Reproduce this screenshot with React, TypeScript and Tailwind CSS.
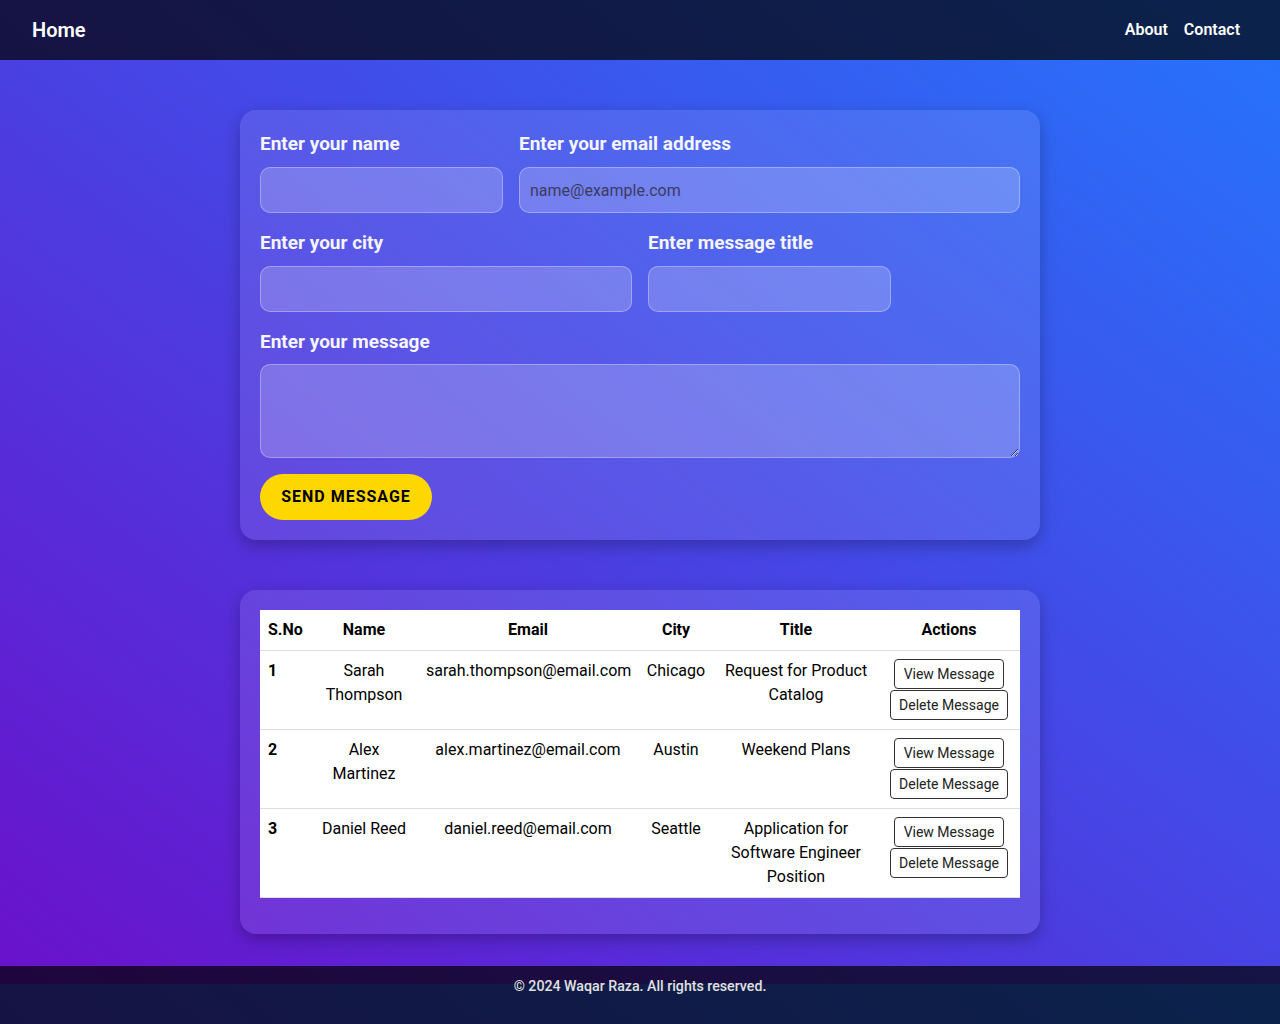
import React from 'react'

const messages = [
  {
    id: 1,
    name: 'Sarah Thompson',
    email: 'sarah.thompson@email.com',
    city: 'Chicago',
    title: 'Request for Product Catalog',
  },
  {
    id: 2,
    name: 'Alex Martinez',
    email: 'alex.martinez@email.com',
    city: 'Austin',
    title: 'Weekend Plans',
  },
  {
    id: 3,
    name: 'Daniel Reed',
    email: 'daniel.reed@email.com',
    city: 'Seattle',
    title: 'Application for Software Engineer Position',
  },
]

const inputClass =
  'h-[46px] w-full rounded-[10px] border border-white/30 bg-white/20 px-[10px] text-base text-white outline-none placeholder:text-[#3b3b63]'

const labelClass = 'block text-[19px] font-bold leading-[28px] text-[#f5f5ff]'

function Field({ label, width, placeholder }: { label: string; width: string; placeholder?: string }) {
  return (
    <div className={width}>
      <label className={`${labelClass} mb-[9px]`}>{label}</label>
      <input className={inputClass} placeholder={placeholder} />
    </div>
  )
}

export default function App() {
  return (
    <div className="flex min-h-screen flex-col bg-[linear-gradient(to_top_right,#6a11cb,#2575fc)] bg-[length:100%_984px] font-['Roboto',sans-serif]">
      <header className="flex h-[60px] items-center justify-between bg-black/70 pl-8 pr-10">
        <a className="text-[20px] font-semibold text-white">Home</a>
        <nav className="flex gap-4 text-base font-semibold text-white">
          <a>About</a>
          <a>Contact</a>
        </nav>
      </header>

      <main className="flex flex-1 flex-col items-center gap-[50px] pt-[50px] pb-8">
        <form className="flex w-[800px] flex-col gap-4 rounded-2xl bg-white/10 p-5 shadow-[0_6px_16px_rgba(0,0,0,0.25)]">
          <div className="flex gap-4">
            <Field label="Enter your name" width="w-[243px]" />
            <Field label="Enter your email address" width="w-[501px]" placeholder="name@example.com" />
          </div>
          <div className="flex gap-4">
            <Field label="Enter your city" width="w-[372px]" />
            <Field label="Enter message title" width="w-[243px]" />
          </div>
          <div>
            <label className={`${labelClass} mb-[8px]`}>Enter your message</label>
            <textarea className="block h-[94px] w-full rounded-[10px] border border-white/30 bg-white/20 px-[10px] py-2 text-base text-white outline-none" />
          </div>
          <div>
            <button
              type="button"
              className="h-[46px] w-[172px] rounded-full bg-[#ffd700] text-base font-bold tracking-[1px] text-black"
            >
              SEND MESSAGE
            </button>
          </div>
        </form>

        <div className="w-[800px] rounded-2xl bg-white/10 px-5 pt-5 pb-9 shadow-[0_6px_16px_rgba(0,0,0,0.25)]">
          <table className="w-full table-fixed border-collapse bg-white text-base leading-6 text-black">
            <colgroup>
              <col className="w-[50px]" />
              <col className="w-[108px]" />
              <col className="w-[220px]" />
              <col className="w-[76px]" />
              <col className="w-[164px]" />
              <col className="w-[142px]" />
            </colgroup>
            <thead>
              <tr className="border-b border-[#dddddd]">
                <th className="p-2 text-left font-bold">S.No</th>
                <th className="p-2 text-center font-bold">Name</th>
                <th className="p-2 text-center font-bold">Email</th>
                <th className="p-2 text-center font-bold">City</th>
                <th className="p-2 text-center font-bold">Title</th>
                <th className="p-2 text-center font-bold">Actions</th>
              </tr>
            </thead>
            <tbody>
              {messages.map((m) => (
                <tr key={m.id} className="border-b border-[#dddddd] align-top">
                  <td className="p-2 text-left font-bold">{m.id}</td>
                  <td className="p-2 text-center">{m.name}</td>
                  <td className="p-2 text-center">{m.email}</td>
                  <td className="p-2 text-center">{m.city}</td>
                  <td className="p-2 text-center">{m.title}</td>
                  <td className="p-2">
                    <div className="flex flex-col items-center gap-px pb-px">
                      <button className="rounded border border-[#333] bg-white px-[8.5px] py-1 text-sm leading-5 text-[#222]">
                        View Message
                      </button>
                      <button className="rounded border border-[#333] bg-white px-[8.5px] py-1 text-sm leading-5 text-[#222]">
                        Delete Message
                      </button>
                    </div>
                  </td>
                </tr>
              ))}
            </tbody>
          </table>
        </div>
      </main>

      <footer className="h-[58px] bg-black/70 pt-[10px] text-center text-[14.2px] font-medium leading-5 text-[#e0e0e0]">
        © 2024 Waqar Raza. All rights reserved.
      </footer>
    </div>
  )
}
